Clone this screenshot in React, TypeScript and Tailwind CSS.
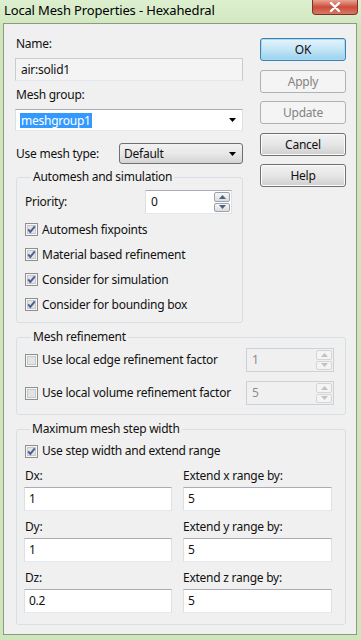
import React from "react";

const font = "font-['Segoe_UI','Noto_Sans',sans-serif]";

function CheckBox({ checked }: { checked: boolean }) {
  return (
    <svg width="13" height="13" viewBox="0 0 13 13" className="shrink-0">
      <rect x="0.5" y="0.5" width="12" height="12" fill="#f6f6f6" stroke="#8e8f8f" />
      <rect x="2.5" y="2.5" width="8" height="8" fill="#e3e3e3" stroke="#c9c9c9" />
      {checked && (
        <path d="M3.2 6.4 L5.3 8.9 L9.8 3.4" stroke="#4a5f97" strokeWidth="1.9" fill="none" />
      )}
    </svg>
  );
}

function CheckRow({ checked, label, className = "" }: { checked: boolean; label: string; className?: string }) {
  return (
    <div className={`flex items-center gap-[4px] ${className}`}>
      <CheckBox checked={checked} />
      <span>{label}</span>
    </div>
  );
}

function Arrow({ up, color }: { up: boolean; color: string }) {
  return (
    <svg width="7" height="4" viewBox="0 0 7 4">
      <path d={up ? "M0 4 L3.5 0 L7 4Z" : "M0 0 L3.5 4 L7 0Z"} fill={color} />
    </svg>
  );
}

function Spinner({ value, disabled, className = "" }: { value: string; disabled?: boolean; className?: string }) {
  return (
    <div
      className={`flex items-stretch border ${
        disabled
          ? "border-[#cdd1d6] bg-[#f0f0f0] text-[#8d8d8d]"
          : "border-[#abadb3] border-b-[#e3e9ef] border-x-[#dbdfe6] bg-white"
      } ${className}`}
    >
      <span className="flex-1 pl-[5px] flex items-center">{value}</span>
      <div className="flex flex-col justify-center gap-[1px] pr-[1px] py-[1px]">
        {[true, false].map((up) => (
          <div
            key={String(up)}
            className={`w-[16px] h-[10px] flex items-center justify-center border rounded-[2px] ${
              disabled ? "border-[#d5d5d5] bg-[#f4f4f4]" : "border-[#9aa2ad] bg-gradient-to-b from-[#f7f7f7] to-[#dcdcdc]"
            }`}
          >
            <Arrow up={up} color={disabled ? "#c2c2c2" : "#4d6185"} />
          </div>
        ))}
      </div>
    </div>
  );
}

function TextBox({ value, className = "" }: { value: string; className?: string }) {
  return (
    <div
      className={`h-[24px] flex items-center pl-[4px] bg-white border border-[#abadb3] border-b-[#e3e9ef] border-x-[#dbdfe6] ${className}`}
    >
      {value}
    </div>
  );
}

function Button({ label, variant = "normal", className = "" }: { label: string; variant?: "default" | "normal" | "disabled"; className?: string }) {
  const styles =
    variant === "default"
      ? "border-[#3c7fb1] bg-gradient-to-b from-[#e5f4fc] via-[#c4e5f6] to-[#98d1ef] shadow-[inset_0_0_0_1px_#a8dcf5]"
      : variant === "disabled"
      ? "border-[#adb2b5] bg-[#f4f4f4] text-[#838383]"
      : "border-[#707070] bg-gradient-to-b from-[#f2f2f2] via-[#e6e6e6] to-[#cfcfcf] shadow-[inset_0_0_0_1px_#fcfcfc]";
  return (
    <div className={`h-[23px] w-[86px] flex items-center justify-center border rounded-[3px] ${styles} ${className}`}>
      {label}
    </div>
  );
}

function Group({ title, className = "", children }: { title: string; className?: string; children: React.ReactNode }) {
  return (
    <fieldset className={`border border-[#d5dfe5] rounded-[3px] ${className}`}>
      <legend className="ml-[6px] px-[2px] leading-[16px]">{title}</legend>
      {children}
    </fieldset>
  );
}

export default function App() {
  return (
    <div className={`w-[361px] h-[640px] flex flex-col bg-[#cfe5bc] text-[12px] leading-[16px] tracking-[-0.25px] text-[#111] ${font}`}>
      {/* Title bar */}
      <div className="h-[23px] flex items-start justify-between bg-gradient-to-b from-[#dcefcf] to-[#d2e8c2]">
        <span className="pl-[4px] pt-[2px] text-[13px] leading-[16px] tracking-[-0.15px] text-black">Local Mesh Properties - Hexahedral</span>
        <div className="mr-[3px] w-[46px] h-[15px] flex items-center justify-center rounded-b-[4px] border border-t-0 border-[#7a3328] bg-gradient-to-b from-[#e8a493] via-[#cc4b3b] to-[#d67864]">
          <svg width="12" height="10" viewBox="0 0 12 10">
            <path d="M2 1 L10 9 M10 1 L2 9" stroke="#fff" strokeWidth="2.4" strokeLinecap="round" />
          </svg>
        </div>
      </div>

      {/* Client area */}
      <div className="flex-1 mx-[3px] mb-[5px] mr-[4px] border border-[#8a9c7e] bg-[#f0f0f0] pl-[11px]">
        <div className="flex">
          {/* Left column */}
          <div className="w-[228px] flex flex-col">
            <span className="mt-[12px] pl-[1px]">Name:</span>
            <div className="mt-[6px] h-[23px] flex items-center pl-[5px] bg-[#f4f4f4] border border-[#c9ccd2] border-b-[#e3e6ea]">
              air:solid1
            </div>
            <span className="mt-[6px] pl-[1px]">Mesh group:</span>
            <div className="mt-[6px] h-[22px] flex items-center justify-between pl-[4px] pr-[6px] bg-white border border-[#abadb3] border-b-[#e3e9ef] border-x-[#dbdfe6]">
              <span className="bg-[#3399ff] text-white px-[1px] leading-[15px]">meshgroup1</span>
              <Arrow up={false} color="#000" />
            </div>
            <div className="mt-[12px] flex items-center justify-between">
              <span className="pl-[1px]">Use mesh type:</span>
              <div className="w-[124px] h-[21px] flex items-center justify-between pl-[4px] pr-[6px] border border-[#707070] rounded-[3px] bg-gradient-to-b from-[#f2f2f2] via-[#e8e8e8] to-[#d4d4d4]">
                <span>Default</span>
                <Arrow up={false} color="#000" />
              </div>
            </div>
            <Group title="Automesh and simulation" className="mt-[5px] ml-[1px] pl-[8px] pr-[10px] pb-[5px]">
              <div className="mt-[5px] h-[24px] flex items-center justify-between">
                <span>Priority:</span>
                <Spinner value="0" className="w-[87px] h-[24px]" />
              </div>
              <div className="mt-[3px] flex flex-col">
                <CheckRow checked label="Automesh fixpoints" className="h-[25px]" />
                <CheckRow checked label="Material based refinement" className="h-[25px]" />
                <CheckRow checked label="Consider for simulation" className="h-[25px]" />
                <CheckRow checked label="Consider for bounding box" className="h-[25px]" />
              </div>
            </Group>
          </div>

          {/* Right column buttons */}
          <div className="ml-[17px] flex flex-col">
            <Button label="OK" variant="default" className="mt-[14px]" />
            <Button label="Apply" variant="disabled" className="mt-[9px]" />
            <Button label="Update" variant="disabled" className="mt-[8px]" />
            <Button label="Cancel" className="mt-[9px]" />
            <Button label="Help" className="mt-[8px]" />
          </div>
        </div>

        <Group title="Mesh refinement" className="mt-[6px] ml-[1px] w-[330px] pl-[8px] pr-[11px] pb-[9px]">
          <div className="mt-[3px] h-[24px] flex items-center justify-between">
            <CheckRow checked={false} label="Use local edge refinement factor" />
            <Spinner value="1" disabled className="w-[88px] h-[24px]" />
          </div>
          <div className="mt-[9px] h-[24px] flex items-center justify-between">
            <CheckRow checked={false} label="Use local volume refinement factor" />
            <Spinner value="5" disabled className="w-[88px] h-[24px]" />
          </div>
        </Group>

        <Group title="Maximum mesh step width" className="mt-[6px] ml-[1px] w-[330px] pl-[7px] pr-[12px] pb-[11px]">
          <CheckRow checked label="Use step width and extend range" className="mt-[4px] h-[20px] pl-[1px]" />
          <div className="mt-[7px] grid grid-cols-[148px_149px] gap-x-[11px]">
            {[
              ["Dx:", "1", "Extend x range by:", "5"],
              ["Dy:", "1", "Extend y range by:", "5"],
              ["Dz:", "0.2", "Extend z range by:", "5"],
            ].map(([l1, v1, l2, v2], i) => (
              <React.Fragment key={l1}>
                <span className={`pl-[1px] ${i > 0 ? "mt-[8px]" : ""}`}>{l1}</span>
                <span className={i > 0 ? "mt-[8px]" : ""}>{l2}</span>
                <TextBox value={v1} className="mt-[3px]" />
                <TextBox value={v2} className="mt-[3px]" />
              </React.Fragment>
            ))}
          </div>
        </Group>
      </div>
    </div>
  );
}
